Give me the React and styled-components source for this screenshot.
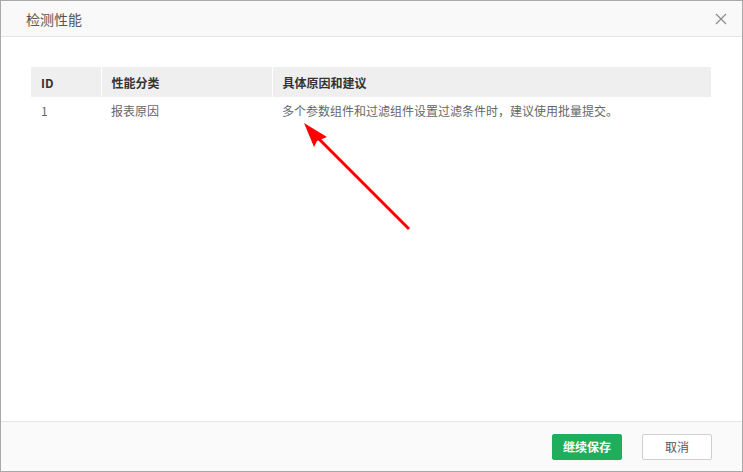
import React from 'react'
import styled, { createGlobalStyle } from 'styled-components'

const Global = createGlobalStyle`
    html, body {
        margin: 0;
        padding: 0;
        background: #b8bcc4;
    }
    body {
        font-family: "Noto Sans CJK SC", "Liberation Sans", sans-serif;
    }
`

const Dialog = styled.div`
    position: relative;
    box-sizing: border-box;
    width: 743px;
    height: 472px;
    border: 1px solid #a9a9a9;
    background: #fff;
    display: flex;
    flex-direction: column;
`

const Header = styled.div`
    height: 35px;
    flex: none;
    display: flex;
    align-items: center;
    justify-content: space-between;
    padding: 0 14px 0 25px;
    background: #f9f9f9;
    border-bottom: 1px solid #e3e5e8;
    h3 {
        margin: 0;
        font-size: 14px;
        font-weight: normal;
        color: #555;
    }
`

const Close = styled.button`
    background: transparent;
    border: 0;
    padding: 0;
    width: 14px;
    height: 14px;
    display: flex;
    cursor: pointer;
`

const Body = styled.div`
    flex: 1;
    padding: 30px 30px 0 30px;
`

const Table = styled.table`
    width: 680px;
    border-collapse: collapse;
    font-size: 12px;
    th {
        background: #efefef;
        color: #333;
        font-weight: bold;
        text-align: left;
        height: 30px;
        padding: 0 10px;
        border-left: 1px solid #fff;
    }
    th:first-child {
        border-left: 0;
    }
    td {
        color: #666;
        height: 27px;
        padding: 0 10px;
    }
`

const Footer = styled.div`
    height: 49px;
    flex: none;
    display: flex;
    align-items: center;
    justify-content: flex-end;
    gap: 20px;
    padding: 0 30px 0 0;
    background: #fafafa;
    border-top: 1px solid #e5e5e5;
`

const Button = styled.button`
    width: 70px;
    height: 26px;
    box-sizing: border-box;
    font-family: inherit;
    font-size: 12px;
    border-radius: 2px;
    cursor: pointer;
    border: 1px solid ${p => (p.primary ? '#1fae5c' : '#cfcfcf')};
    background: ${p => (p.primary ? '#1fae5c' : '#fff')};
    color: ${p => (p.primary ? '#fff' : '#555')};
    font-weight: ${p => (p.primary ? 'bold' : 'normal')};
`

const Arrow = styled.svg`
    position: absolute;
    left: 0;
    top: 0;
    pointer-events: none;
`

export default function App() {
    return (
        <>
            <Global />
            <Dialog>
                <Header>
                    <h3>检测性能</h3>
                    <Close>
                        <svg width="14" height="14" viewBox="0 0 14 14">
                            <path d="M2 2 L12 12 M12 2 L2 12" stroke="#888" strokeWidth="1.1" />
                        </svg>
                    </Close>
                </Header>
                <Body>
                    <Table>
                        <colgroup>
                            <col style={{ width: 70 }} />
                            <col style={{ width: 171 }} />
                            <col />
                        </colgroup>
                        <thead>
                            <tr>
                                <th>ID</th>
                                <th>性能分类</th>
                                <th>具体原因和建议</th>
                            </tr>
                        </thead>
                        <tbody>
                            <tr>
                                <td>1</td>
                                <td>报表原因</td>
                                <td>多个参数组件和过滤组件设置过滤条件时，建议使用批量提交。</td>
                            </tr>
                        </tbody>
                    </Table>
                </Body>
                <Footer>
                    <Button primary>继续保存</Button>
                    <Button>取消</Button>
                </Footer>
                <Arrow width="743" height="472">
                    <line x1="408" y1="228" x2="312" y2="132" stroke="#ff0000" strokeWidth="3" />
                    <polygon points="303,122 326,136 316,140 313,146" fill="#ff0000" />
                </Arrow>
            </Dialog>
        </>
    )
}
